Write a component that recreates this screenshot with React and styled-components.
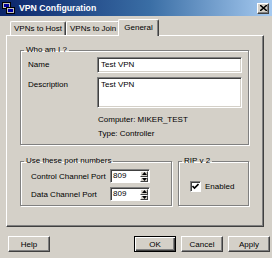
import React from 'react';
import styled, { createGlobalStyle } from 'styled-components';

const Global = createGlobalStyle`
  body { margin: 0; background: #d4d0c8; }
  * { box-sizing: border-box; }
`;

const Window = styled.div`
  width: 272px;
  height: 258px;
  background: #d4d0c8;
  display: flex;
  flex-direction: column;
  font-family: "Liberation Sans", Arial, sans-serif;
  font-size: 8px;
  color: #000;
  overflow: hidden;
`;

const TitleBar = styled.div`
  height: 16px;
  display: flex;
  align-items: center;
  padding: 0 3px 0 2px;
  background: linear-gradient(90deg, #0a246a 0%, #3a6ea5 55%, #a6caf0 100%);
`;

const Title = styled.span`
  flex: 1;
  margin-left: 4px;
  color: #fff;
  font-weight: bold;
  font-size: 8.7px;
`;

const CloseBtn = styled.div`
  width: 12px;
  height: 11px;
  background: #d4d0c8;
  border: 1px solid;
  border-color: #fff #404040 #404040 #fff;
  box-shadow: inset -1px -1px #808080;
  display: flex;
  align-items: center;
  justify-content: center;
`;

const Body = styled.div`
  padding: 3px 8px 0 6px;
  display: flex;
  flex-direction: column;
  flex: 1;
`;

const TabRow = styled.div`
  display: flex;
  align-items: flex-end;
  height: 16px;
  padding-left: 4px;
  position: relative;
  z-index: 1;
`;

const Tab = styled.div`
  height: ${p => (p.$active ? 17 : 14)}px;
  margin: 0 ${p => (p.$active ? -2 : 0)}px ${p => (p.$active ? -1 : 0)}px;
  padding: 0 ${p => (p.$active ? 5 : 3)}px;
  display: flex;
  align-items: center;
  padding-bottom: ${p => (p.$active ? 2 : 0)}px;
  background: #d4d0c8;
  border-top: 1px solid #fff;
  border-left: 1px solid #fff;
  border-right: 1px solid #404040;
  box-shadow: inset -1px 0 #808080;
  border-radius: 2px 2px 0 0;
  white-space: nowrap;
`;

const Panel = styled.div`
  height: 192px;
  border: 1px solid;
  border-color: #fff #404040 #404040 #fff;
  box-shadow: inset -1px -1px #808080;
  padding: 9px 14px 0 13px;
  display: flex;
  flex-direction: column;
`;

const Group = styled.fieldset`
  margin: 0;
  padding: 0;
  min-width: 0;
  border: 1px solid #808080;
  box-shadow: inset 1px 1px #fff, 1px 1px #fff;
  height: ${p => p.$h}px;
  width: ${p => p.$w || 'auto'};
`;

const Legend = styled.legend`
  padding: 0 2px;
  margin-left: 3px;
  line-height: 10px;
`;

const WhoGrid = styled.div`
  display: grid;
  grid-template-columns: 69px 145px;
  row-gap: 4px;
  padding: 2px 0 0 7px;
  align-items: start;
`;

const Label = styled.span`
  line-height: 16px;
`;

const Field = styled.div`
  height: ${p => p.$h}px;
  background: #fff;
  border: 1px solid;
  border-color: #808080 #fff #fff #808080;
  box-shadow: inset 1px 1px #404040, inset -1px -1px #d4d0c8;
  padding: 2px 3px;
  line-height: 10px;
`;

const Info = styled.div`
  grid-column: 2;
  padding-left: 1px;
  line-height: 14px;
  margin-top: 1px;
`;

const Row = styled.div`
  display: flex;
  gap: 6px;
  margin-top: 11px;
`;

const PortGrid = styled.div`
  display: grid;
  grid-template-columns: 79px 40px;
  row-gap: 4px;
  padding: 3px 0 0 10px;
  align-items: center;
`;

const Spin = styled.div`
  display: flex;
  height: 14px;
  background: #fff;
  border: 1px solid;
  border-color: #808080 #fff #fff #808080;
  box-shadow: inset 1px 1px #404040;
`;

const SpinText = styled.span`
  flex: 1;
  padding: 1px 0 0 2px;
  line-height: 10px;
`;

const SpinBtns = styled.div`
  width: 9px;
  display: flex;
  flex-direction: column;
  padding: 1px 1px 0 0;
`;

const SpinBtn = styled.div`
  flex: 1;
  background: #d4d0c8;
  border: 1px solid;
  border-color: #fff #404040 #404040 #fff;
  display: flex;
  align-items: center;
  justify-content: center;
`;

const CheckRow = styled.div`
  display: flex;
  align-items: center;
  gap: 4px;
  padding: 15px 0 0 11px;
`;

const CheckBox = styled.div`
  width: 11px;
  height: 11px;
  background: #fff;
  border: 1px solid;
  border-color: #808080 #fff #fff #808080;
  box-shadow: inset 1px 1px #404040;
  display: flex;
  align-items: center;
  justify-content: center;
`;

const Footer = styled.div`
  display: flex;
  gap: 5px;
  margin: 9px -6px 0 2px;
`;

const Button = styled.div`
  width: 42px;
  height: 16px;
  display: flex;
  align-items: center;
  justify-content: center;
  border: 1px solid;
  border-color: ${p => (p.$default ? '#000' : '#fff #404040 #404040 #fff')};
  box-shadow: ${p => (p.$default
    ? 'inset 1px 1px #fff, inset -1px -1px #404040, inset -2px -2px #808080'
    : 'inset -1px -1px #808080')};
  margin-left: ${p => (p.$push ? 'auto' : '0')};
`;

const Arrow = ({ up }) => (
  <svg width="5" height="3" viewBox="0 0 5 3">
    <path d={up ? 'M2.5 0 L5 3 L0 3 Z' : 'M0 0 L5 0 L2.5 3 Z'} fill="#000" />
  </svg>
);

const Spinner = ({ value }) => (
  <Spin>
    <SpinText>{value}</SpinText>
    <SpinBtns>
      <SpinBtn><Arrow up /></SpinBtn>
      <SpinBtn><Arrow /></SpinBtn>
    </SpinBtns>
  </Spin>
);

const AppIcon = () => (
  <svg width="13" height="12" viewBox="0 0 13 12">
    <rect x="0.5" y="0.5" width="8" height="6" fill="#c0c0c0" stroke="#000" />
    <rect x="2" y="2" width="5" height="3" fill="#0000a0" />
    <rect x="4.5" y="5.5" width="8" height="6" fill="#c0c0c0" stroke="#000" />
    <rect x="6" y="7" width="5" height="3" fill="#0000a0" />
  </svg>
);

const App = () => (
  <>
    <Global />
    <Window>
      <TitleBar>
        <AppIcon />
        <Title>VPN Configuration</Title>
        <CloseBtn>
          <svg width="7" height="6" viewBox="0 0 7 6">
            <path d="M0 0 L7 6 M7 0 L0 6" stroke="#000" strokeWidth="1.5" />
          </svg>
        </CloseBtn>
      </TitleBar>
      <Body>
        <TabRow>
          <Tab>VPNs to Host</Tab>
          <Tab>VPNs to Join</Tab>
          <Tab $active>General</Tab>
        </TabRow>
        <Panel>
          <Group $h={100}>
            <Legend>Who am I ?</Legend>
            <WhoGrid>
              <Label>Name</Label>
              <Field $h={16}>Test VPN</Field>
              <Label>Description</Label>
              <Field $h={31}>Test VPN</Field>
              <Info>
                Computer: MIKER_TEST<br />
                Type: Controller
              </Info>
            </WhoGrid>
          </Group>
          <Row>
            <Group $h={50} $w="152px">
              <Legend>Use these port numbers</Legend>
              <PortGrid>
                <span>Control Channel Port</span>
                <Spinner value="809" />
                <span>Data Channel Port</span>
                <Spinner value="809" />
              </PortGrid>
            </Group>
            <Group $h={50} $w="71px">
              <Legend>RIP v 2</Legend>
              <CheckRow>
                <CheckBox>
                  <svg width="7" height="7" viewBox="0 0 7 7">
                    <path d="M0.5 3 L2.5 5 L6.5 1" stroke="#000" strokeWidth="1.6" fill="none" />
                  </svg>
                </CheckBox>
                <span>Enabled</span>
              </CheckRow>
            </Group>
          </Row>
        </Panel>
        <Footer>
          <Button>Help</Button>
          <Button $default $push>OK</Button>
          <Button>Cancel</Button>
          <Button>Apply</Button>
        </Footer>
      </Body>
    </Window>
  </>
);

export default App;
